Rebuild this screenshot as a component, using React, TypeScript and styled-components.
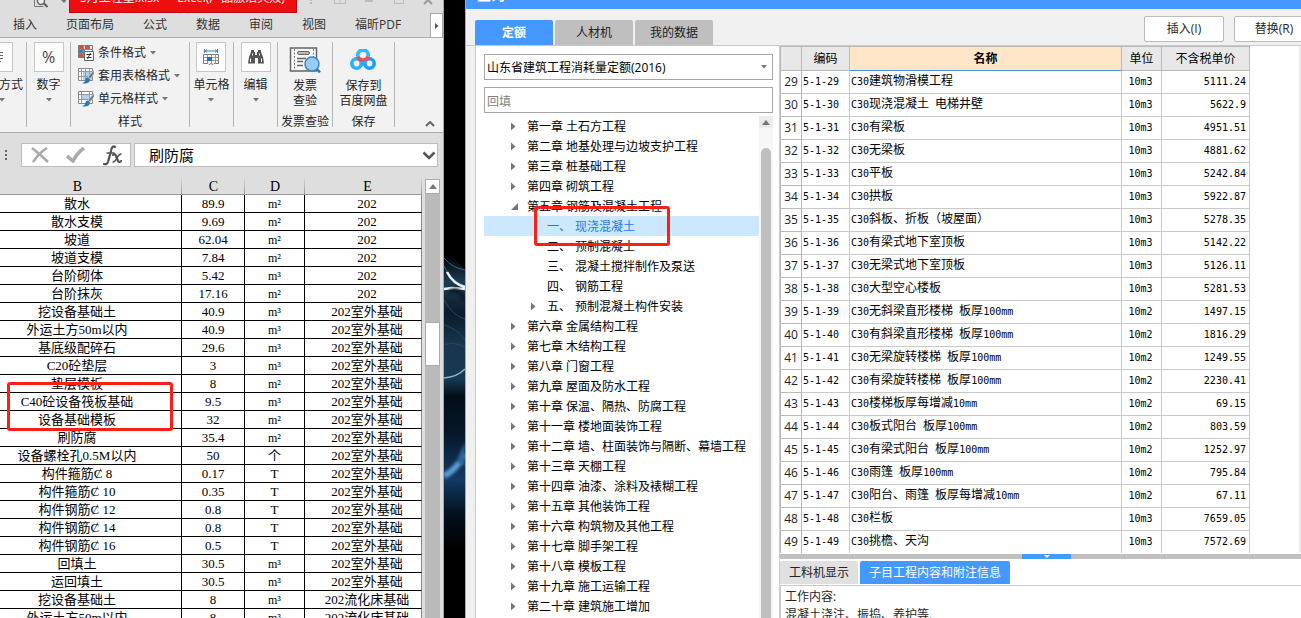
import React from "react";
import styled, { createGlobalStyle } from "styled-components";

const ui = `"Open Sans", "Noto Sans CJK SC", sans-serif`;
const song = `"Liberation Serif", "Noto Sans CJK SC", serif`;

const GlobalStyle = createGlobalStyle`
  *, *::before, *::after { box-sizing: border-box; }
  html, body { margin: 0; padding: 0; overflow: hidden; }
  body { font-family: ${ui}; font-size: 12px; line-height: 16px; color: #262626; background: #000; }
  button, input, select { font: inherit; color: inherit; margin: 0; padding: 0; border-radius: 0; }
  ul { list-style: none; margin: 0; padding: 0; }
  svg { display: block; flex: none; }
`;

const Screen = styled.div`
  display: grid;
  grid-template-columns: minmax(0, 444fr) minmax(0, 21fr) minmax(0, 836fr);
  height: 100vh;
  overflow: hidden;
`;

/* ---------- spreadsheet window ---------- */

const Workbook = styled.section`
  position: relative;
  display: flex;
  flex-direction: column;
  min-height: 0;
  overflow: hidden;
  background: #dedede;
  border-right: 1px solid #a8a8a8;
`;

const TitleStrip = styled.header`
  position: relative;
  display: flex;
  align-items: flex-end;
  height: 13px;
  padding-left: 34px;
  flex: none;
`;

const TitleText = styled.h1`
  display: flex;
  align-items: flex-end;
  gap: 18px;
  flex: none;
  width: 228px;
  height: 13px;
  margin: 0 0 0 3px;
  padding: 0 10px 6px;
  overflow: hidden;
  white-space: nowrap;
  font-size: 12px;
  font-weight: 400;
  line-height: 16px;
  color: #fff;
  background: #ec0f0f;
  border: 1px solid #b80c0c;
  border-top: 0;
`;

const RibbonTabs = styled.nav`
  display: flex;
  align-items: stretch;
  height: 25px;
  flex: none;
  padding-left: 13px;
  gap: 29px;
  border-bottom: 1px solid #aaa;
`;

const RibbonTab = styled.button`
  border: 0;
  background: none;
  color: #333;
  white-space: nowrap;
`;

const TabScroll = styled.button`
  display: grid;
  place-items: center;
  width: 13px;
  margin-left: auto;
  background: #fff;
  border: 1px solid #aaa;
  border-bottom: 0;
`;

const Ribbon = styled.div`
  display: flex;
  height: 95px;
  flex: none;
  padding: 4px 0 5px;
  background: #f2f2f2;
  border-bottom: 1px solid #aaa;
`;

const Group = styled.div<{ $w: number }>`
  display: flex;
  flex-direction: column;
  align-items: center;
  flex: none;
  width: ${(p) => p.$w}px;
  border-right: 1px solid #b5b5b5;
  white-space: nowrap;
`;

const GroupLabel = styled.div`
  margin-top: auto;
  line-height: 16px;
  height: 13px;
`;

const Tool = styled.button<{ $end?: boolean }>`
  display: flex;
  flex-direction: column;
  align-items: ${(p) => (p.$end ? "flex-end" : "center")};
  align-self: ${(p) => (p.$end ? "flex-end" : "center")};
  padding: 0;
  padding-right: ${(p) => (p.$end ? 3 : 0)}px;
  border: 0;
  background: none;
  gap: 5px;
  white-space: nowrap;
  line-height: 16px;
`;

const ToolFace = styled.span<{ $inset?: boolean }>`
  display: grid;
  place-items: center;
  width: 30px;
  height: 30px;
  margin-right: ${(p) => (p.$inset ? 10 : 0)}px;
  background: #fdfdfd;
  border: 1px solid #c6c6c6;
  color: #444;
  font-size: 16px;
`;

const InsetArrow = styled.span`
  padding-right: 18px;
`;

const BigTool = styled.button`
  display: flex;
  flex-direction: column;
  align-items: center;
  border: 0;
  background: none;
  line-height: 15px;
`;

const BigIcon = styled.span`
  display: grid;
  place-items: center;
  height: 36px;
`;

const StyleList = styled.div`
  display: flex;
  flex-direction: column;
  align-self: stretch;
  padding-left: 7px;
`;

const StyleButton = styled.button`
  display: flex;
  align-items: center;
  gap: 4px;
  height: 23px;
  padding-bottom: 2px;
  border: 0;
  background: none;
`;

const Collapse = styled.button`
  margin: auto 8px 0 auto;
  border: 0;
  background: none;
`;

const FormulaRow = styled.div`
  display: flex;
  height: 43px;
  flex: none;
  padding: 10px 5px 9px 5px;
  gap: 3px;
`;

const Grip = styled.span`
  display: grid;
  place-items: center start;
  width: 13px;
`;

const FormulaTools = styled.div`
  display: flex;
  align-items: center;
  justify-content: space-around;
  width: 110px;
  background: #fff;
  border: 1px solid #bdbdbd;
  button { border: 0; background: none; }
`;

const FormulaBox = styled.label`
  display: flex;
  align-items: center;
  flex: 1;
  min-width: 0;
  background: #fff;
  border: 1px solid #bdbdbd;
  input {
    flex: 1;
    min-width: 0;
    padding-left: 14px;
    border: 0;
    outline: 0;
    background: none;
    color: #000;
    font-size: 15px;
    line-height: 20px;
  }
`;

const SheetArea = styled.div`
  display: flex;
  flex: 1;
  min-height: 0;
  overflow: hidden;
`;

const SheetView = styled.div`
  position: relative;
  flex: 1;
  min-width: 0;
`;

const Sheet = styled.table`
  width: 100%;
  table-layout: fixed;
  border-collapse: separate;
  border-spacing: 0;
  font-family: ${song};
  font-size: 13px;
  line-height: 16px;
  color: #000;
  text-align: center;
  th {
    height: 19px;
    padding: 3px 0 0;
    line-height: 15px;
    font-size: 14px;
    font-weight: 400;
    border-bottom: 1px solid #999;
    background: linear-gradient(#dedede, #999) right / 1px 100% no-repeat;
  }
  td {
    height: 18px;
    padding: 1px 0 0;
    background: #fff;
    border-right: 1px solid #000;
    border-bottom: 1px solid #000;
    white-space: nowrap;
  }
  tr > :first-child { padding-right: 27px; }
  tr > :last-child { padding-left: 8px; }
  td:last-child { border-right-color: #8a8a8a; }
`;

const Unit = styled.span<{ $small: boolean }>`
  display: block;
  height: 16px;
  font-size: ${(p) => (p.$small ? 12 : 13)}px;
`;

const SheetScroll = styled.div`
  display: flex;
  flex-direction: column;
  flex: none;
  width: 15px;
  margin: 3px 3px 0;
  background: #bababa;
`;

const ScrollUp = styled.button`
  display: grid;
  place-items: center;
  height: 15px;
  background: #fff;
  border: 1px solid #ababab;
`;

const ScrollThumb = styled.div`
  height: 44px;
  margin-top: 128px;
  background: #fff;
  border: 1px solid #ababab;
`;

const Callout = styled.div<{ $x: number; $y: number; $w: number; $h: number }>`
  position: absolute;
  left: ${(p) => p.$x}px;
  top: ${(p) => p.$y}px;
  width: ${(p) => p.$w}px;
  height: ${(p) => p.$h}px;
  border: 3px solid #fb1f16;
  border-radius: 3px;
  pointer-events: none;
`;

/* ---------- desktop between the windows ---------- */

const Desktop = styled.div`
  overflow: hidden;
  background: #000;
  svg { width: 100%; height: 618px; }
`;

/* ---------- quota window ---------- */

const QuotaWindow = styled.section`
  display: flex;
  flex-direction: column;
  min-height: 0;
  min-width: 0;
  overflow: hidden;
  background: #f0f0f0;
  border-left: 1px solid #a9a9a9;
`;

const QuotaTitle = styled.h1`
  display: flex;
  align-items: flex-end;
  height: 9px;
  flex: none;
  margin: 0;
  padding: 0 11px 5px;
  overflow: hidden;
  background: #4498ff;
  color: #fff;
  font-size: 14px;
  line-height: 18px;
`;

const TopBar = styled.div`
  display: flex;
  height: 37px;
  flex: none;
  padding: 7px 0 0 9px;
  border-bottom: 1px solid #cacaca;
`;

const TopTabs = styled.div`
  display: flex;
  align-items: flex-end;
  gap: 2px;
`;

const TopTab = styled.button<{ $active?: boolean }>`
  width: 78px;
  height: 25px;
  padding-top: 1px;
  border: 0;
  border-radius: 2px 2px 0 0;
  font-weight: ${(p) => (p.$active ? 700 : 400)};
  color: ${(p) => (p.$active ? "#fff" : "#222")};
  background: ${(p) => (p.$active ? "#4498ff" : "#bfbfbf")};
`;

const Actions = styled.div`
  display: flex;
  gap: 10px;
  margin-left: auto;
  margin-right: -13px;
`;

const Action = styled.button`
  width: 80px;
  height: 26px;
  background: #fff;
  border: 1px solid #bcbcbc;
  border-radius: 2px;
`;

const Body = styled.div`
  display: flex;
  flex: 1;
  min-height: 0;
`;

const Sidebar = styled.aside`
  display: flex;
  flex-direction: column;
  flex: none;
  width: 305px;
  margin-left: 9px;
  padding: 8px 6px 0 8px;
  gap: 3px;
  background: #fff;
  border-left: 1px solid #cacaca;
  border-right: 1px solid #cacaca;
`;

const Fields = styled.div`
  display: flex;
  flex-direction: column;
  gap: 7px;
`;

const Field = styled.label`
  position: relative;
  display: flex;
  align-items: center;
  height: 26px;
  flex: none;
  border: 1px solid #a6a6a6;
  background: #fff;
  select, input {
    width: 100%;
    height: 24px;
    padding: 2px 2px 0;
    border: 0;
    outline: 0;
    background: transparent;
    color: #000;
    appearance: none;
  }
  input::placeholder { color: #808080; opacity: 1; }
  svg { position: absolute; right: 5px; }
`;

const TreeArea = styled.div`
  position: relative;
  display: flex;
  flex: 1;
  min-height: 0;
`;

const Tree = styled.ul`
  flex: 1;
  min-width: 0;
`;

const TreeRow = styled.li<{ $child?: boolean; $selected?: boolean }>`
  display: flex;
  align-items: center;
  height: 20px;
  padding-left: ${(p) => (p.$child ? 47 : 27)}px;
  white-space: nowrap;
  color: ${(p) => (p.$selected ? "#1f78e6" : "#000")};
  background: ${(p) => (p.$selected ? "#cce8ff" : "transparent")};
  button {
    display: flex;
    gap: ${(p) => (p.$child ? 4 : 0)}px;
    padding-top: 2px;
    border: 0;
    background: none;
  }
`;

const Twisty = styled.span`
  display: grid;
  place-items: center start;
  width: 16px;
  height: 20px;
  flex: none;
`;

const TreeScroll = styled.div`
  display: flex;
  flex-direction: column;
  align-items: center;
  width: 14px;
  flex: none;
  background: #f7f7f7;
  button {
    display: grid;
    place-items: center;
    width: 14px;
    height: 12px;
    border: 0;
    background: #ebebeb;
  }
`;

const TreeThumb = styled.div`
  flex: 1;
  width: 10px;
  margin-top: 20px;
  border-radius: 5px 5px 0 0;
  background: #bfbfbf;
`;

const Main = styled.main`
  display: flex;
  flex-direction: column;
  flex: 1;
  min-width: 0;
  min-height: 0;
  background: #fff;
`;

const GridView = styled.div`
  flex: 1;
  min-height: 0;
  overflow: hidden;
  border-right: 2px solid #ececec;
`;

const Quota = styled.table`
  width: calc(100% - 49px);
  table-layout: fixed;
  border-collapse: separate;
  border-spacing: 0;
  color: #000;
  th, td {
    height: 23px;
    padding: 0 3px 2px 1px;
    line-height: 20px;
    white-space: nowrap;
    overflow: hidden;
    border-right: 1px solid #c9c9c9;
    border-bottom: 1px solid #c9c9c9;
  }
  thead th {
    height: 25px;
    padding: 0;
    font-weight: 400;
    background: #e8e8e8;
    border-top: 1px solid #b9b9b9;
    border-color: #b9b9b9;
  }
  thead th:nth-child(3) {
    font-weight: 700;
    background: #ffe6c8;
    border-bottom-color: #4a90d9;
  }
  tr > :first-child { border-left: 1px solid #b9b9b9; }
  tbody th {
    padding: 0;
    font-weight: 400;
    text-align: center;
    border-color: #b9b9b9;
    color: #222;
  }
  td:nth-child(4) { text-align: center; }
  td:nth-child(5) { text-align: right; }
`;

const Ascii = styled.span`
  font-family: "DejaVu Sans Mono", monospace;
  font-size: 10px;
  line-height: 10px;
  white-space: pre;
`;

const Splitter = styled.div`
  display: flex;
  justify-content: center;
  height: 5px;
  flex: none;
  margin-top: 1px;
  padding-left: 12px;
  background: #c0c0c0;
  button {
    display: grid;
    place-items: center;
    width: 49px;
    height: 5px;
    border: 0;
    background: #4498ff;
  }
`;

const BottomTabs = styled.div`
  display: flex;
  gap: 2px;
  height: 27px;
  flex: none;
  padding: 2px 0 1px 0;
  border-bottom: 1px solid #cacaca;
`;

const BottomTab = styled.button<{ $active?: boolean }>`
  padding: 0 9px;
  border: 0;
  border-radius: 2px 2px 0 0;
  color: ${(p) => (p.$active ? "#fff" : "#222")};
  background: ${(p) => (p.$active ? "#4498ff" : "#e0e0e0")};
`;

const Notes = styled.div`
  height: 32px;
  flex: none;
  padding: 2px 4px 0;
  overflow: hidden;
  line-height: 18px;
  white-space: nowrap;
  border-left: 1px solid #cacaca;
  p { margin: 0; }
`;

/* ---------- drawings ---------- */

const Down = () => (
  <svg width="6" height="4" viewBox="0 0 6 4"><path d="M0 0h6L3 3.5z" fill="#777" /></svg>
);
const Up = () => (
  <svg width="8" height="5" viewBox="0 0 8 5"><path d="M0 5h8L4 0z" fill="#777" /></svg>
);
const Right = () => (
  <svg width="5" height="9" viewBox="0 0 5 9"><path d="M0 .5v8L4.5 4.5z" fill="#777" /></svg>
);
const Opened = () => (
  <svg width="7" height="7" viewBox="0 0 7 7"><path d="M7 0v7H0z" fill="#777" /></svg>
);

const AlignIcon = () => (
  <svg width="18" height="18" viewBox="0 0 18 18" stroke="#666"><path d="M4 4.500h10M6 7.500h8M4 10.500h10M6 13.500h6" /></svg>
);

const ConditionalIcon = () => (
  <svg width="16" height="16" viewBox="0 0 16 16">
    <path d="M.5.500h14v12H.500z" fill="#fff" stroke="#777" />
    <path d="M1 1h4v3H1zM7 1h5v3H7z" fill="#d9532c" />
    <path d="M1 5h6v3H1z" fill="#3f7fbf" />
    <path d="M1 9h4v3H1z" fill="#d9532c" />
    <path d="M.5 4.500h14M.5 8.500h6M5.500 0v12" stroke="#888" fill="none" />
    <path d="M6.500 6.500h9v9h-9z" fill="#fff" stroke="#666" />
    <path d="M8.500 9.500h5M8.500 12.500h5M12.500 8l-3 6" stroke="#333" fill="none" />
  </svg>
);

const FormatIcon = ({ plain }: { plain?: boolean }) => (
  <svg width="16" height="16" viewBox="0 0 16 16">
    <path d="M.5.500h14v12H.500z" fill="#fff" stroke="#888" />
    <path d={plain ? "M3 3h8v6H3z" : "M5 4h9v8H5z"} fill="#b4d0ea" />
    <path d="M.5 3.500h14M.5 8.500h14M3.500.500v12M11.500.500v12" stroke="#999" fill="none" />
    {!plain && <path d="M7.500.500v12" stroke="#999" />}
    <path d="M16 2l-6 7 2 2 4-5z" fill="#777" stroke="#f2f2f2" strokeWidth=".5" />
    <path d="M10 9.500c-2 0-2.500 1.500-3 3.500-.4 1.300-1.500 1.700-3 2 3 1.200 7.500.8 8-3.500z" fill="#2f77bd" />
  </svg>
);

const CellsIcon = () => (
  <svg width="16" height="17" viewBox="0 0 16 17" fill="none">
    <path d="M1.500 0v4M14.500 0v4M2 2h12M4 .500L2.200 2 4 3.500M12 .500L13.800 2 12 3.500" stroke="#3e82c4" />
    <path d="M.5 5.500h15v9h-4.500l-1 1-2-1-2 1-1-1H.500z" fill="#fff" stroke="#777" />
    <path d="M.5 8.500h15M.5 11.500h15M4.500 5.500v9M8.500 5.500v9M12.500 5.500v9" stroke="#999" />
    <path d="M4 8h5v4H4z" fill="#1f70c1" />
  </svg>
);

const Binoculars = () => (
  <svg width="16" height="14" viewBox="0 0 16 14" fill="#555">
    <path d="M3 0h3v2h1v3h2V2h1V0h3v2l2 5 1 6.500h-6V8H7v5.500H0L1 7l2-5z" />
    <path d="M2.500 8.500v3.500M13.500 8.500v3.500M4.500 3.500v2M11.500 3.500v2" stroke="#fff" />
  </svg>
);

const InvoiceIcon = () => (
  <svg width="32" height="28" viewBox="0 0 32 28" fill="none">
    <path d="M1.500 2h26v23h-26z" fill="#f8f8f8" stroke="#666" strokeWidth="1.500" />
    <path d="M5.500 3v21M24.500 3v10" stroke="#777" strokeDasharray="2 1.500" />
    <rect x="8.500" y="5.500" width="12" height="3" rx="1.500" fill="#bbb" stroke="#666" />
    <path d="M8 12.500h9M8 15.500h6M8 19.500h6" stroke="#666" strokeWidth="1.500" />
    <path d="M27.500 22.500l3.500 4" stroke="#2b76b5" strokeWidth="2.500" />
    <circle cx="23" cy="18" r="7" fill="#9ccaf8" stroke="#3a86c0" strokeWidth="1.500" />
  </svg>
);

const CloudDiskIcon = () => (
  <svg width="26" height="22" viewBox="0 0 26 22" fill="none" strokeWidth="3.600">
    <circle cx="6.500" cy="14.500" r="4.700" stroke="#25b4f5" />
    <circle cx="19.500" cy="14.500" r="4.700" stroke="#1e9ff5" />
    <path d="M8 7.500A5.200 5.200 0 1 1 18 7.500" stroke="#35b8f8" />
    <path d="M8 7.500a5.200 5.200 0 0 0 10 0" stroke="#f5455c" />
    <path d="M10 17.500l6-5.500" stroke="#22aef6" strokeWidth="3" />
  </svg>
);

const Wallpaper = () => (
  <svg viewBox="0 0 21 618" preserveAspectRatio="none" aria-hidden="true">
    <defs>
      <linearGradient id="sea" x1="0" y1="0" x2="0" y2="1">
        <stop offset="0" stopColor="#000" />
        <stop offset=".09" stopColor="#1d3a50" />
        <stop offset=".2" stopColor="#0a1c2b" />
        <stop offset=".3" stopColor="#18354d" />
        <stop offset=".42" stopColor="#173a52" />
        <stop offset=".48" stopColor="#030d16" />
        <stop offset=".6" stopColor="#061628" />
        <stop offset=".76" stopColor="#123a63" />
        <stop offset=".88" stopColor="#04101d" />
        <stop offset="1" stopColor="#000" />
      </linearGradient>
      <filter id="soft" x="-50%" y="-20%" width="200%" height="140%"><feGaussianBlur stdDeviation="1.600" /></filter>
      <filter id="fine" x="-20%" y="-5%" width="140%" height="110%"><feGaussianBlur stdDeviation=".6" /></filter>
    </defs>
    <path d="M0 255l8 1 13 14v280H0z" fill="url(#sea)" />
    <g filter="url(#fine)" fill="none">
      <path d="M0 258q8 10 21 12M0 266q6 14 21 20" stroke="#3b6580" />
      <path d="M3 272q6 12 18 15M0 289l8-1 13 1" stroke="#e8f4fb" strokeWidth="2.500" />
      <path d="M0 300q9 16 21 19M0 325q12 3 21 15M0 345q8-4 21 2" stroke="#28495f" />
      <path d="M0 378q13-1 21-9" stroke="#8db5c8" strokeWidth="1.500" />
    </g>
    <g filter="url(#soft)">
      <path d="M0 476q12-6 21-22" stroke="#5b9bd2" strokeWidth="6" fill="none" />
      <path d="M12 462l9-20v24z" fill="#2d639a" />
      <path d="M6 292q8-6 15 8" stroke="#0a1620" strokeWidth="4" fill="none" />
    </g>
  </svg>
);

/* ---------- data ---------- */

const base = "202室外基础";
const sheetRows: [string, string, string, string][] = [
  ["散水", "89.9", "m²", "202"],
  ["散水支模", "9.69", "m²", "202"],
  ["坡道", "62.04", "m²", "202"],
  ["坡道支模", "7.84", "m²", "202"],
  ["台阶砌体", "5.42", "m³", "202"],
  ["台阶抹灰", "17.16", "m²", "202"],
  ["挖设备基础土", "40.9", "m³", base],
  ["外运土方50m以内", "40.9", "m³", base],
  ["基底级配碎石", "29.6", "m³", base],
  ["C20砼垫层", "3", "m³", base],
  ["垫层模板", "8", "m²", base],
  ["C40砼设备筏板基础", "9.5", "m³", base],
  ["设备基础模板", "32", "m²", base],
  ["刷防腐", "35.4", "m²", base],
  ["设备螺栓孔0.5M以内", "50", "个", base],
  ["构件箍筋Ȼ 8", "0.17", "T", base],
  ["构件箍筋Ȼ 10", "0.35", "T", base],
  ["构件钢筋Ȼ 12", "0.8", "T", base],
  ["构件钢筋Ȼ 14", "0.8", "T", base],
  ["构件钢筋Ȼ 16", "0.5", "T", base],
  ["回填土", "30.5", "m³", base],
  ["运回填土", "30.5", "m³", base],
  ["挖设备基础土", "8", "m³", "202流化床基础"],
  ["外运土方50m以内", "8", "m³", "202流化床基础"],
];

type Node = { no?: string; name: string; mark?: "closed" | "open"; selected?: boolean };
const tree: Node[] = [
  { name: "第一章 土石方工程", mark: "closed" },
  { name: "第二章 地基处理与边坡支护工程", mark: "closed" },
  { name: "第三章 桩基础工程", mark: "closed" },
  { name: "第四章 砌筑工程", mark: "closed" },
  { name: "第五章 钢筋及混凝土工程", mark: "open" },
  { no: "一、", name: "现浇混凝土", selected: true },
  { no: "二、", name: "预制混凝土" },
  { no: "三、", name: "混凝土搅拌制作及泵送" },
  { no: "四、", name: "钢筋工程" },
  { no: "五、", name: "预制混凝土构件安装", mark: "closed" },
  { name: "第六章 金属结构工程", mark: "closed" },
  { name: "第七章 木结构工程", mark: "closed" },
  { name: "第八章 门窗工程", mark: "closed" },
  { name: "第九章 屋面及防水工程", mark: "closed" },
  { name: "第十章 保温、隔热、防腐工程", mark: "closed" },
  { name: "第十一章 楼地面装饰工程", mark: "closed" },
  { name: "第十二章 墙、柱面装饰与隔断、幕墙工程", mark: "closed" },
  { name: "第十三章 天棚工程", mark: "closed" },
  { name: "第十四章 油漆、涂料及裱糊工程", mark: "closed" },
  { name: "第十五章 其他装饰工程", mark: "closed" },
  { name: "第十六章 构筑物及其他工程", mark: "closed" },
  { name: "第十七章 脚手架工程", mark: "closed" },
  { name: "第十八章 模板工程", mark: "closed" },
  { name: "第十九章 施工运输工程", mark: "closed" },
  { name: "第二十章 建筑施工增加", mark: "closed" },
];

const quotaRows: [number, string, string, string][] = [
  [29, "C30建筑物滑模工程", "10m3", "5111.24"],
  [30, "C30现浇混凝土 电梯井壁", "10m3", "5622.9"],
  [31, "C30有梁板", "10m3", "4951.51"],
  [32, "C30无梁板", "10m3", "4881.62"],
  [33, "C30平板", "10m3", "5242.84"],
  [34, "C30拱板", "10m3", "5922.87"],
  [35, "C30斜板、折板（坡屋面）", "10m3", "5278.35"],
  [36, "C30有梁式地下室顶板", "10m3", "5142.22"],
  [37, "C30无梁式地下室顶板", "10m3", "5126.11"],
  [38, "C30大型空心楼板", "10m3", "5281.53"],
  [39, "C30无斜梁直形楼梯 板厚100mm", "10m2", "1497.15"],
  [40, "C30有斜梁直形楼梯 板厚100mm", "10m2", "1816.29"],
  [41, "C30无梁旋转楼梯 板厚100mm", "10m2", "1249.55"],
  [42, "C30有梁旋转楼梯 板厚100mm", "10m2", "2230.41"],
  [43, "C30楼梯板厚每增减10mm", "10m2", "69.15"],
  [44, "C30板式阳台 板厚100mm", "10m2", "803.59"],
  [45, "C30有梁式阳台 板厚100mm", "10m2", "1252.97"],
  [46, "C30雨篷 板厚100mm", "10m2", "795.84"],
  [47, "C30阳台、雨篷 板厚每增减10mm", "10m2", "67.11"],
  [48, "C30栏板", "10m3", "7659.05"],
  [49, "C30挑檐、天沟", "10m3", "7572.69"],
];

/* Half-width characters take exactly half of a full-width one. */
const Mixed = ({ text }: { text: string }) => (
  <>
    {text.split(/([\x20-\x7e]+)/).filter(Boolean).map((part, i) =>
      /^[\x20-\x7e]/.test(part) ? <Ascii key={i}>{part}</Ascii> : part
    )}
  </>
);

const WorkbookPane = () => (
  <Workbook>
    <TitleStrip>
      <svg width="32" height="13" viewBox="0 0 32 13" fill="none">
        <path d="M.5 0v6.500h9" stroke="#777" />
        <circle cx="7" cy="1" r="3.500" fill="#eee" stroke="#666" strokeWidth="1.500" />
        <path d="M10 3.500l3.500 3.500" stroke="#555" strokeWidth="2" />
        <path d="M27 0h6l-3 3z" fill="#777" />
      </svg>
      <TitleText>
        <span>5月工程量.xlsx</span>
        <span>Excel(产品激活失败)</span>
      </TitleText>
      <svg width="136" height="13" viewBox="0 0 136 13" fill="none" stroke="#bbb">
        <path d="M14 0v1M14 2v2" strokeWidth="2" />
        <path d="M37.500 0v3.500h11V0M43 0v3" />
        <path d="M68 1h8" strokeWidth="2" />
        <path d="M97.500 0v3.500h9V0" />
        <path d="M135 4l-4-4-4 4" stroke="#999" strokeWidth="2" />
      </svg>
    </TitleStrip>
    <RibbonTabs>
      {["插入", "页面布局", "公式", "数据", "审阅", "视图", "福昕PDF"].map((t) => (
        <RibbonTab key={t}>{t}</RibbonTab>
      ))}
      <TabScroll aria-label="更多选项卡">
        <svg width="4" height="6" viewBox="0 0 4 6"><path d="M0 0v6l3.500-3z" fill="#555" /></svg>
      </TabScroll>
    </RibbonTabs>
    <Ribbon>
      <Group $w={27}>
        <Tool $end>
          <ToolFace $inset><AlignIcon /></ToolFace>
          <span>方式</span>
          <InsetArrow><Down /></InsetArrow>
        </Tool>
      </Group>
      <Group $w={44}>
        <Tool><ToolFace>%</ToolFace><span>数字</span><Down /></Tool>
      </Group>
      <Group $w={119}>
        <StyleList>
          <StyleButton><ConditionalIcon />条件格式<Down /></StyleButton>
          <StyleButton><FormatIcon />套用表格格式<Down /></StyleButton>
          <StyleButton><FormatIcon plain />单元格样式<Down /></StyleButton>
        </StyleList>
        <GroupLabel>样式</GroupLabel>
      </Group>
      <Group $w={44}>
        <Tool><ToolFace><CellsIcon /></ToolFace><span>单元格</span><Down /></Tool>
      </Group>
      <Group $w={44}>
        <Tool><ToolFace><Binoculars /></ToolFace><span>编辑</span><Down /></Tool>
      </Group>
      <Group $w={55}>
        <BigTool><BigIcon><InvoiceIcon /></BigIcon>发票<br />查验</BigTool>
        <GroupLabel>发票查验</GroupLabel>
      </Group>
      <Group $w={62}>
        <BigTool><BigIcon><CloudDiskIcon /></BigIcon>保存到<br />百度网盘</BigTool>
        <GroupLabel>保存</GroupLabel>
      </Group>
      <Collapse aria-label="折叠功能区">
        <svg width="10" height="6" viewBox="0 0 10 6" fill="none"><path d="M1 5l4-4 4 4" stroke="#666" strokeWidth="2" /></svg>
      </Collapse>
    </Ribbon>
    <FormulaRow>
      <Grip>
        <svg width="2" height="10" viewBox="0 0 2 10" fill="#666"><path d="M0 0h2v2H0zM0 4h2v2H0zM0 8h2v2H0z" /></svg>
      </Grip>
      <FormulaTools>
        <button aria-label="取消">
          <svg width="18" height="16" viewBox="0 0 18 16" fill="none" stroke="#aaa" strokeWidth="2.500"><path d="M1 1q8 6 16 14M16 1Q8 6 2 15" /></svg>
        </button>
        <button aria-label="输入">
          <svg width="20" height="16" viewBox="0 0 20 16" fill="none" stroke="#aaa" strokeWidth="3.500"><path d="M1 9l6 5Q11 6 18 1" /></svg>
        </button>
        <button aria-label="插入函数">
          <svg width="19" height="21" viewBox="0 0 19 21" fill="none" stroke="#555" strokeLinecap="round">
            <path d="M12 2Q9 0 8 6L5 17q-1 3-4 2" strokeWidth="2.200" />
            <path d="M4 8h7" strokeWidth="1.500" />
            <path d="M10 10q2-2 3 1l2 5q1 2 3 0" strokeWidth="2.200" />
            <path d="M18 9q-2 0-4 4t-4 4" strokeWidth="1.500" />
          </svg>
        </button>
      </FormulaTools>
      <FormulaBox>
        <input aria-label="编辑栏" defaultValue="刷防腐" />
        <svg width="15" height="9" viewBox="0 0 15 9" fill="none"><path d="M1.500 1.500l5.500 5.500L12.500 1.500" stroke="#555" strokeWidth="2.500" /></svg>
      </FormulaBox>
    </FormulaRow>
    <SheetArea>
      <SheetView>
        <Sheet>
          <colgroup>
            <col />
            <col width={63} />
            <col width={60} />
            <col width={117} />
          </colgroup>
          <thead>
            <tr><th scope="col">B</th><th scope="col">C</th><th scope="col">D</th><th scope="col">E</th></tr>
          </thead>
          <tbody>
            {sheetRows.map(([name, qty, unit, place], i) => (
              <tr key={i}>
                <td>{name}</td>
                <td>{qty}</td>
                <td><Unit $small={unit.length > 1}>{unit}</Unit></td>
                <td>{place}</td>
              </tr>
            ))}
          </tbody>
        </Sheet>
        <Callout $x={7} $y={206} $w={166} $h={49} />
      </SheetView>
      <SheetScroll>
        <ScrollUp aria-label="向上滚动"><Up /></ScrollUp>
        <ScrollThumb />
      </SheetScroll>
    </SheetArea>
  </Workbook>
);

const QuotaPane = () => (
  <QuotaWindow>
    <QuotaTitle>查询</QuotaTitle>
    <TopBar>
      <TopTabs>
        <TopTab $active>定额</TopTab>
        <TopTab>人材机</TopTab>
        <TopTab>我的数据</TopTab>
      </TopTabs>
      <Actions>
        <Action>插入(I)</Action>
        <Action>替换(R)</Action>
      </Actions>
    </TopBar>
    <Body>
      <Sidebar>
        <Fields>
          <Field>
            <select aria-label="定额库"><option>山东省建筑工程消耗量定额(2016)</option></select>
            <Down />
          </Field>
          <Field>
            <input aria-label="搜索" placeholder="回填" />
          </Field>
        </Fields>
        <TreeArea>
          <Tree>
            {tree.map((n) => (
              <TreeRow key={n.name} $child={!!n.no} $selected={n.selected}>
                <Twisty>{n.mark === "closed" ? <Right /> : n.mark === "open" ? <Opened /> : null}</Twisty>
                <button>
                  {n.no && <span>{n.no}</span>}
                  <span>{n.name}</span>
                </button>
              </TreeRow>
            ))}
          </Tree>
          <TreeScroll>
            <button aria-label="向上滚动"><Up /></button>
            <TreeThumb />
          </TreeScroll>
          <Callout $x={50} $y={90} $w={136} $h={40} />
        </TreeArea>
      </Sidebar>
      <Main>
        <GridView>
          <Quota>
            <colgroup>
              <col width={22} />
              <col width={48} />
              <col />
              <col width={40} />
              <col width={88} />
            </colgroup>
            <thead>
              <tr>
                <th aria-label="行号" />
                <th scope="col">编码</th>
                <th scope="col">名称</th>
                <th scope="col">单位</th>
                <th scope="col">不含税单价</th>
              </tr>
            </thead>
            <tbody>
              {quotaRows.map(([n, name, unit, price]) => (
                <tr key={n}>
                  <th scope="row">{n}</th>
                  <td><Mixed text={`5-1-${n}`} /></td>
                  <td><Mixed text={name} /></td>
                  <td><Mixed text={unit} /></td>
                  <td><Mixed text={price} /></td>
                </tr>
              ))}
            </tbody>
          </Quota>
        </GridView>
        <Splitter>
          <button aria-label="折叠面板">
            <svg width="6" height="3" viewBox="0 0 6 3"><path d="M0 0h6L3 3z" fill="#fff" /></svg>
          </button>
        </Splitter>
        <BottomTabs>
          <BottomTab>工料机显示</BottomTab>
          <BottomTab $active>子目工程内容和附注信息</BottomTab>
        </BottomTabs>
        <Notes>
          <p>工作内容:</p>
          <p>混凝土浇注、振捣、养护等.</p>
        </Notes>
      </Main>
    </Body>
  </QuotaWindow>
);

export default function App() {
  return (
    <>
      <GlobalStyle />
      <Screen>
        <WorkbookPane />
        <Desktop><Wallpaper /></Desktop>
        <QuotaPane />
      </Screen>
    </>
  );
}
